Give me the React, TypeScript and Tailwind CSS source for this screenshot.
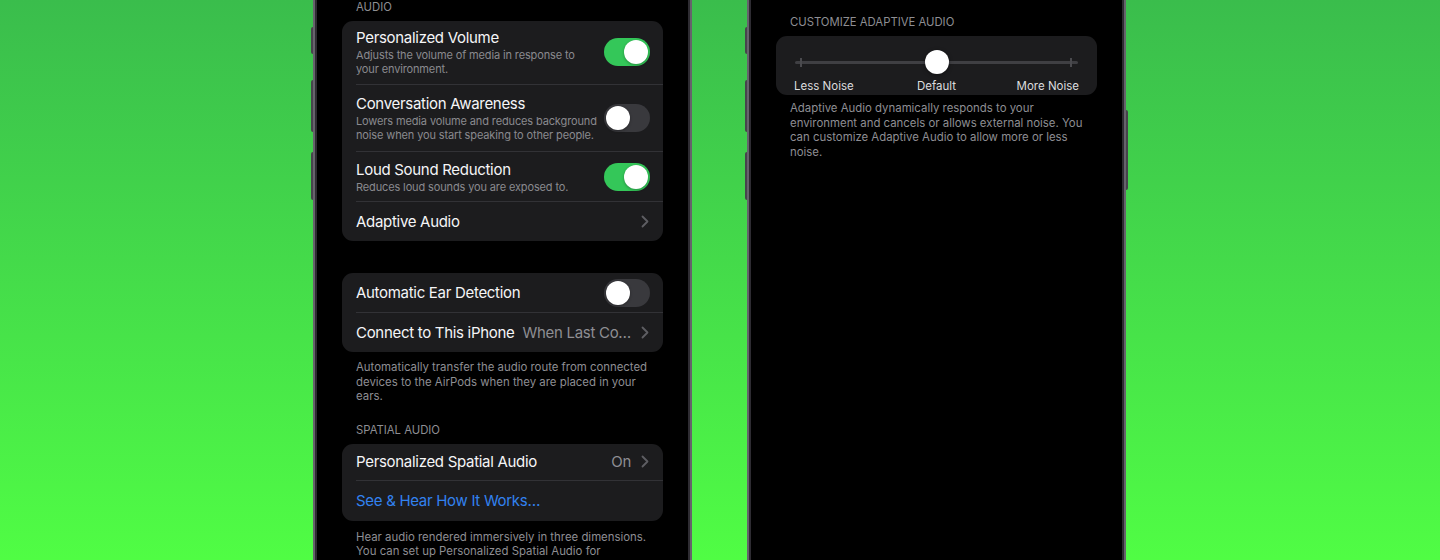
import type { ReactNode } from "react";

const font = { fontFamily: "Inter, 'Noto Sans', sans-serif" };

function Toggle({ on }: { on: boolean }) {
    return (
        <div
            className={`flex h-[28px] w-[46px] shrink-0 items-center rounded-full p-[2px] ${
                on ? "justify-end bg-[#34c759]" : "justify-start bg-[#39393d]"
            }`}
        >
            <div className="h-[24px] w-[24px] rounded-full bg-white shadow-[0_1px_3px_rgba(0,0,0,0.3)]" />
        </div>
    );
}

function Chevron() {
    return (
        <svg width="8" height="13" viewBox="0 0 8 13" className="shrink-0">
            <path d="M1.5 1.5 6.5 6.5 1.5 11.5" fill="none" stroke="#5e5e63" strokeWidth="1.8" strokeLinecap="round" strokeLinejoin="round" />
        </svg>
    );
}

function Header({ children }: { children: ReactNode }) {
    return (
        <div className="pl-[14px] text-[11.3px] leading-[14px] text-[#8e8e93] uppercase">
            {children}
        </div>
    );
}

function Footer({ lines, className = "" }: { lines: string[]; className?: string }) {
    return (
        <div className={`pl-[14px] text-[11.4px] leading-[14.5px] text-[#8e8e93] ${className}`}>
            {lines.map((l) => (
                <div key={l} className="whitespace-nowrap">
                    {l}
                </div>
            ))}
        </div>
    );
}

type RowProps = {
    title: string;
    sub?: string[];
    right?: ReactNode;
    last?: boolean;
    pad: string;
    titleClass?: string;
};

function Row({ title, sub, right, last, pad, titleClass = "text-[#f5f5f7]" }: RowProps) {
    return (
        <div className="pl-[14px]">
            <div className={`flex items-center gap-3 pr-[13px] ${pad} ${last ? "" : "border-b border-[#323236]"}`}>
                <div className="min-w-0 flex-1">
                    <div className={`whitespace-nowrap text-[15px] leading-[20px] tracking-[-0.02em] ${titleClass}`}>{title}</div>
                    {sub?.map((s) => (
                        <div key={s} className="whitespace-nowrap text-[11px] leading-[14px] tracking-[-0.012em] text-[#8a8a8f]">
                            {s}
                        </div>
                    ))}
                </div>
                {right}
            </div>
        </div>
    );
}

function Value({ text }: { text?: string }) {
    return (
        <div className="flex items-center gap-[10px] pr-[1px]">
            {text && <span className="whitespace-nowrap text-[15px] leading-[20px] tracking-[-0.02em] text-[#8e8e93]">{text}</span>}
            <Chevron />
        </div>
    );
}

function Phone({ children, rightButton }: { children: ReactNode; rightButton?: boolean }) {
    return (
        <div className="relative h-[560px] w-[379px] shrink-0">
            {/* hardware buttons */}
            <div className="absolute top-[27px] -left-[2px] h-[27px] w-[2px] rounded-l-sm bg-[#47444c]" />
            <div className="absolute top-[80px] -left-[2px] h-[52px] w-[2px] rounded-l-sm bg-[#47444c]" />
            <div className="absolute top-[152px] -left-[2px] h-[48px] w-[2px] rounded-l-sm bg-[#47444c]" />
            {rightButton && <div className="absolute top-[110px] -right-[2px] h-[80px] w-[2px] rounded-r-sm bg-[#47444c]" />}
            <div className="h-full border-x-[2px] border-[#66636c]">
                <div className="h-full overflow-hidden border-x-[2px] border-[#2e2c32] bg-black px-[25px]">{children}</div>
            </div>
        </div>
    );
}

function SettingsScreen() {
    return (
        <div>
            <Header>Audio</Header>
            <div className="mt-[7px] rounded-[11px] bg-[#1c1c1e]">
                <Row
                    title="Personalized Volume"
                    sub={["Adjusts the volume of media in response to", "your environment."]}
                    right={<Toggle on />}
                    pad="pt-[7px] pb-[8px]"
                />
                <Row
                    title="Conversation Awareness"
                    sub={["Lowers media volume and reduces background", "noise when you start speaking to other people."]}
                    right={<Toggle on={false} />}
                    pad="pt-[9px] pb-[9px]"
                />
                <Row
                    title="Loud Sound Reduction"
                    sub={["Reduces loud sounds you are exposed to."]}
                    right={<Toggle on />}
                    pad="pt-[8px] pb-[7px]"
                />
                <Row title="Adaptive Audio" right={<Value />} last pad="h-[39px]" />
            </div>

            <div className="mt-[32px] rounded-[11px] bg-[#1c1c1e]">
                <Row title="Automatic Ear Detection" right={<Toggle on={false} />} pad="h-[40px]" />
                <Row title="Connect to This iPhone" right={<Value text="When Last Co…" />} last pad="h-[39px]" />
            </div>
            <Footer
                className="mt-[8px]"
                lines={[
                    "Automatically transfer the audio route from connected",
                    "devices to the AirPods when they are placed in your",
                    "ears.",
                ]}
            />

            <div className="mt-[19px]">
                <Header>Spatial Audio</Header>
            </div>
            <div className="mt-[7px] rounded-[11px] bg-[#1c1c1e]">
                <Row title="Personalized Spatial Audio" right={<Value text="On" />} pad="h-[37px]" />
                <Row title="See & Hear How It Works…" titleClass="text-[#3282f0]" last pad="h-[40px]" />
            </div>
            <Footer
                className="mt-[9px]"
                lines={[
                    "Hear audio rendered immersively in three dimensions.",
                    "You can set up Personalized Spatial Audio for",
                    "improved audio that's tuned to you.",
                ]}
            />
        </div>
    );
}

function AdaptiveScreen() {
    return (
        <div className="pt-[15px]">
            <Header>Customize Adaptive Audio</Header>
            <div className="mt-[7px] rounded-[11px] bg-[#1c1c1e] px-[19px] pt-[14px] pb-[2px]">
                {/* noise level slider */}
                <div className="relative h-[24px]">
                    <div className="absolute top-[11px] right-0 left-0 h-[3px] rounded-full bg-[#3f3f43]" />
                    <div className="absolute top-[8px] left-[5px] h-[9px] w-[2px] bg-[#4a4a4e]" />
                    <div className="absolute top-[8px] right-[6px] h-[9px] w-[2px] bg-[#4a4a4e]" />
                    <div className="absolute top-0 left-[130px] h-[24px] w-[24px] rounded-full bg-white shadow-[0_1px_4px_rgba(0,0,0,0.4)]" />
                </div>
                <div className="mt-[5px] grid grid-cols-3 text-[11.5px] leading-[14px] text-[#dcdcde]">
                    <span className="-ml-[1px]">Less Noise</span>
                    <span className="text-center">Default</span>
                    <span className="-mr-[1px] text-right">More Noise</span>
                </div>
            </div>
            <Footer
                className="mt-[6px]"
                lines={[
                    "Adaptive Audio dynamically responds to your",
                    "environment and cancels or allows external noise. You",
                    "can customize Adaptive Audio to allow more or less",
                    "noise.",
                ]}
            />
        </div>
    );
}

export default function App() {
    return (
        <div
            style={font}
            className="flex h-[560px] w-[1440px] gap-[55px] overflow-hidden bg-linear-to-b from-[#3abd4c] to-[#50fd44] pl-[313px] antialiased"
        >
            <Phone>
                <SettingsScreen />
            </Phone>
            <Phone rightButton>
                <AdaptiveScreen />
            </Phone>
        </div>
    );
}
